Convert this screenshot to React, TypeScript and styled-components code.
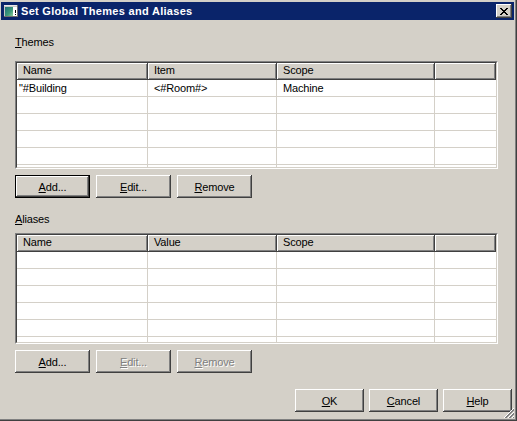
import React from "react";
import styled, { createGlobalStyle, css } from "styled-components";

const Global = createGlobalStyle`
  html, body { margin: 0; padding: 0; background: #d4d0c8; }
  body { font-family: "Liberation Sans", Arial, sans-serif; }
`;

const Window = styled.div`
  position: relative;
  width: 517px;
  height: 421px;
  box-sizing: border-box;
  padding: 2px 3px 2px 1px;
  background: #d4d0c8;
  box-shadow: inset -1px -1px 0 #404040, inset -2px -2px 0 #808080;
  display: flex;
  flex-direction: column;
  font-family: "Liberation Sans", Arial, sans-serif;
  font-size: 11px;
  letter-spacing: -0.15px;
  color: #000;
`;

const TitleBar = styled.div`
  height: 18px;
  background: #0a246a;
  display: flex;
  align-items: center;
  padding: 0 2px 0 2px;
`;

const TitleText = styled.span`
  flex: 1;
  margin-left: 2px;
  color: #fff;
  font-weight: bold;
  font-size: 11px;
  letter-spacing: 0.3px;
  white-space: nowrap;
`;

const raised = css`
  background: #d4d0c8;
  box-shadow: inset -1px -1px 0 #404040, inset 1px 1px 0 #ffffff,
    inset -2px -2px 0 #808080, inset 2px 2px 0 #d4d0c8;
`;

const CloseButton = styled.div`
  ${raised};
  width: 16px;
  height: 14px;
  display: flex;
  align-items: center;
  justify-content: center;
  padding-left: 0px;
  box-sizing: border-box;
`;

const Content = styled.div`
  flex: 1;
  display: flex;
  flex-direction: column;
  padding-left: 14px;
`;

const SectionLabel = styled.div<{ $top: number }>`
  margin-top: ${(p) => p.$top}px;
  height: 13px;
  line-height: 13px;
`;

const TableOuter = styled.div<{ $top: number; $height: number }>`
  margin-top: ${(p) => p.$top}px;
  width: 483px;
  height: ${(p) => p.$height}px;
  box-sizing: border-box;
  border: 1px solid;
  border-color: #808080 #ffffff #ffffff #808080;
`;

const TableInner = styled.div`
  height: 100%;
  box-sizing: border-box;
  border: 1px solid;
  border-color: #404040 #d4d0c8 #d4d0c8 #404040;
  background: #fff;
  display: flex;
  flex-direction: column;
  overflow: hidden;
`;

const COLS = "131px 129px 158px 61px";

const HeaderRow = styled.div`
  display: grid;
  grid-template-columns: ${COLS};
  height: 17px;
  flex: none;
`;

const HeaderCell = styled.div`
  background: #d4d0c8;
  box-shadow: inset -1px -1px 0 #404040, inset 1px 1px 0 #ffffff,
    inset -2px -2px 0 #808080;
  padding-left: 6px;
  line-height: 15px;
  white-space: nowrap;
`;

const Body = styled.div`
  flex: 1;
  overflow: hidden;
`;

const Row = styled.div`
  display: grid;
  grid-template-columns: ${COLS};
  height: 17px;
  box-sizing: border-box;
  border-bottom: 1px solid #d4d0c8;
`;

const Cell = styled.div<{ $first?: boolean }>`
  border-right: 1px solid #d4d0c8;
  padding-left: ${(p) => (p.$first ? 2 : 6)}px;
  line-height: 16px;
  white-space: nowrap;
  overflow: hidden;
  &:last-child { border-right: none; }
`;

const ButtonRow = styled.div<{ $top: number }>`
  margin-top: ${(p) => p.$top}px;
  display: flex;
  gap: 6px;
`;

const Button = styled.button<{ $default?: boolean; $width?: number }>`
  ${raised};
  width: ${(p) => p.$width ?? 75}px;
  height: 23px;
  padding: 0;
  margin: 0;
  box-sizing: border-box;
  border: ${(p) => (p.$default ? "1px solid #000" : "none")};
  font-family: "Liberation Sans", Arial, sans-serif;
  font-size: 11px;
  letter-spacing: -0.15px;
  color: #000;
  &:disabled {
    color: #808080;
    text-shadow: 1px 1px 0 #ffffff;
  }
`;

const Footer = styled.div`
  margin-top: 16px;
  display: flex;
  justify-content: flex-end;
  gap: 5px;
  padding-right: 2px;
`;

const U = styled.span`
  text-decoration: underline;
  text-underline-offset: 1px;
`;

const Grip = styled.svg`
  position: absolute;
  right: 2px;
  bottom: 2px;
`;

const TitleIcon = () => (
  <svg width="16" height="16" viewBox="0 0 16 16" shapeRendering="crispEdges">
    <defs>
      <linearGradient id="ig" x1="0" y1="0" x2="1" y2="1">
        <stop offset="0" stopColor="#1f6f7a" />
        <stop offset="0.6" stopColor="#3c9a7a" />
        <stop offset="1" stopColor="#8fcf9a" />
      </linearGradient>
    </defs>
    <rect x="1" y="2" width="14" height="12" fill="#c8c8c8" />
    <rect x="1" y="2" width="14" height="1" fill="#e8e8e8" />
    <rect x="1" y="13" width="14" height="1" fill="#707070" />
    <rect x="14" y="2" width="1" height="12" fill="#707070" />
    <rect x="2" y="4" width="8" height="9" fill="url(#ig)" />
    <rect x="10" y="4" width="4" height="9" fill="#ffffff" />
    <rect x="12" y="7" width="1" height="3" fill="#000" />
    <rect x="12" y="11" width="1" height="1" fill="#000" />
  </svg>
);

const CloseGlyph = () => (
  <svg width="8" height="7" viewBox="0 0 8 7" shapeRendering="crispEdges">
    <path
      d="M0 0h2v1h-2z M6 0h2v1h-2z M1 1h2v1h-2z M5 1h2v1h-2z M2 2h4v1h-4z M3 3h2v1h-2z M2 4h4v1h-4z M1 5h2v1h-2z M5 5h2v1h-2z M0 6h2v1h-2z M6 6h2v1h-2z"
      fill="#000"
    />
  </svg>
);

type TableProps = {
  top: number;
  height: number;
  headers: string[];
  rows: string[][];
};

const ListView = ({ top, height, headers, rows }: TableProps) => {
  const all = [...rows];
  while (all.length < 7) all.push(["", "", "", ""]);
  return (
    <TableOuter $top={top} $height={height}>
      <TableInner>
        <HeaderRow>
          {headers.map((h, i) => (
            <HeaderCell key={i}>{h}</HeaderCell>
          ))}
        </HeaderRow>
        <Body>
          {all.map((r, i) => (
            <Row key={i}>
              {r.map((c, j) => (
                <Cell key={j} $first={j === 0}>
                  {c}
                </Cell>
              ))}
            </Row>
          ))}
        </Body>
      </TableInner>
    </TableOuter>
  );
};

export default function App() {
  return (
    <>
      <Global />
      <Window>
        <TitleBar>
          <TitleIcon />
          <TitleText>Set Global Themes and Aliases</TitleText>
          <CloseButton>
            <CloseGlyph />
          </CloseButton>
        </TitleBar>
        <Content>
          <SectionLabel $top={16}>
            <U>T</U>hemes
          </SectionLabel>
          <ListView
            top={12}
            height={108}
            headers={["Name", "Item", "Scope", ""]}
            rows={[['"#Building', "<#Room#>", "Machine", ""]]}
          />
          <ButtonRow $top={6}>
            <Button $default>
              <U>A</U>dd...
            </Button>
            <Button>
              <U>E</U>dit...
            </Button>
            <Button>
              <U>R</U>emove
            </Button>
          </ButtonRow>
          <SectionLabel $top={15}>
            <U>A</U>liases
          </SectionLabel>
          <ListView
            top={7}
            height={111}
            headers={["Name", "Value", "Scope", ""]}
            rows={[]}
          />
          <ButtonRow $top={6}>
            <Button>
              <U>A</U>dd...
            </Button>
            <Button disabled>
              <U>E</U>dit...
            </Button>
            <Button disabled>
              <U>R</U>emove
            </Button>
          </ButtonRow>
          <Footer>
            <Button $width={69}>
              <U>O</U>K
            </Button>
            <Button $width={69}>
              <U>C</U>ancel
            </Button>
            <Button $width={69}>
              <U>H</U>elp
            </Button>
          </Footer>
        </Content>
        <Grip width="12" height="12" viewBox="0 0 12 12" shapeRendering="crispEdges">
          <path d="M11 1 L1 11" stroke="#ffffff" />
          <path d="M11 2 L2 11 M11 3 L3 11" stroke="#808080" />
          <path d="M11 5 L5 11" stroke="#ffffff" />
          <path d="M11 6 L6 11 M11 7 L7 11" stroke="#808080" />
          <path d="M11 9 L9 11" stroke="#ffffff" />
          <path d="M11 10 L10 11" stroke="#808080" />
        </Grip>
      </Window>
    </>
  );
}
